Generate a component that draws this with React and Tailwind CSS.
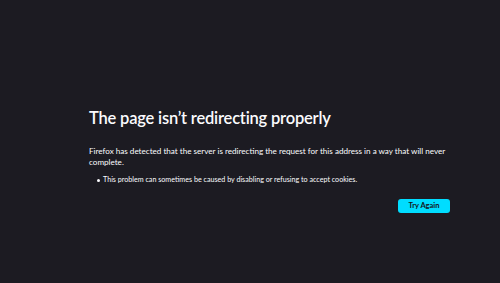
export default function App() {
  return (
    <div className="min-h-[283px] w-[500px] bg-[#1c1b22] text-[#fbfbfe] pt-[106px] pl-[89px]" style={{ fontFamily: 'Lato, "Noto Sans", sans-serif' }}>
      <div className="w-[362px]">
        <h1 className="text-[16.5px] leading-[24px] font-semibold tracking-[-0.2px]">The page isn’t redirecting properly</h1>
        <p className="mt-[16px] text-[8.1px] leading-[11px]">
          Firefox has detected that the server is redirecting the request for this address in a way that will never complete.
        </p>
        <ul className="mt-[7px] pl-[8px] text-[7.15px] leading-[10px]">
          <li className="flex items-center gap-[3px]">
            <span className="h-[3px] w-[3px] shrink-0 rounded-full bg-[#fbfbfe]" />
            <span>This problem can sometimes be caused by disabling or refusing to accept cookies.</span>
          </li>
        </ul>
        <div className="mt-[14px] flex justify-end pr-[1px]">
          <button className="h-[14px] w-[52px] rounded-[3px] bg-[#00ddff] text-[#15141a] text-[7.5px] font-bold leading-none">Try Again</button>
        </div>
      </div>
    </div>
  );
}
